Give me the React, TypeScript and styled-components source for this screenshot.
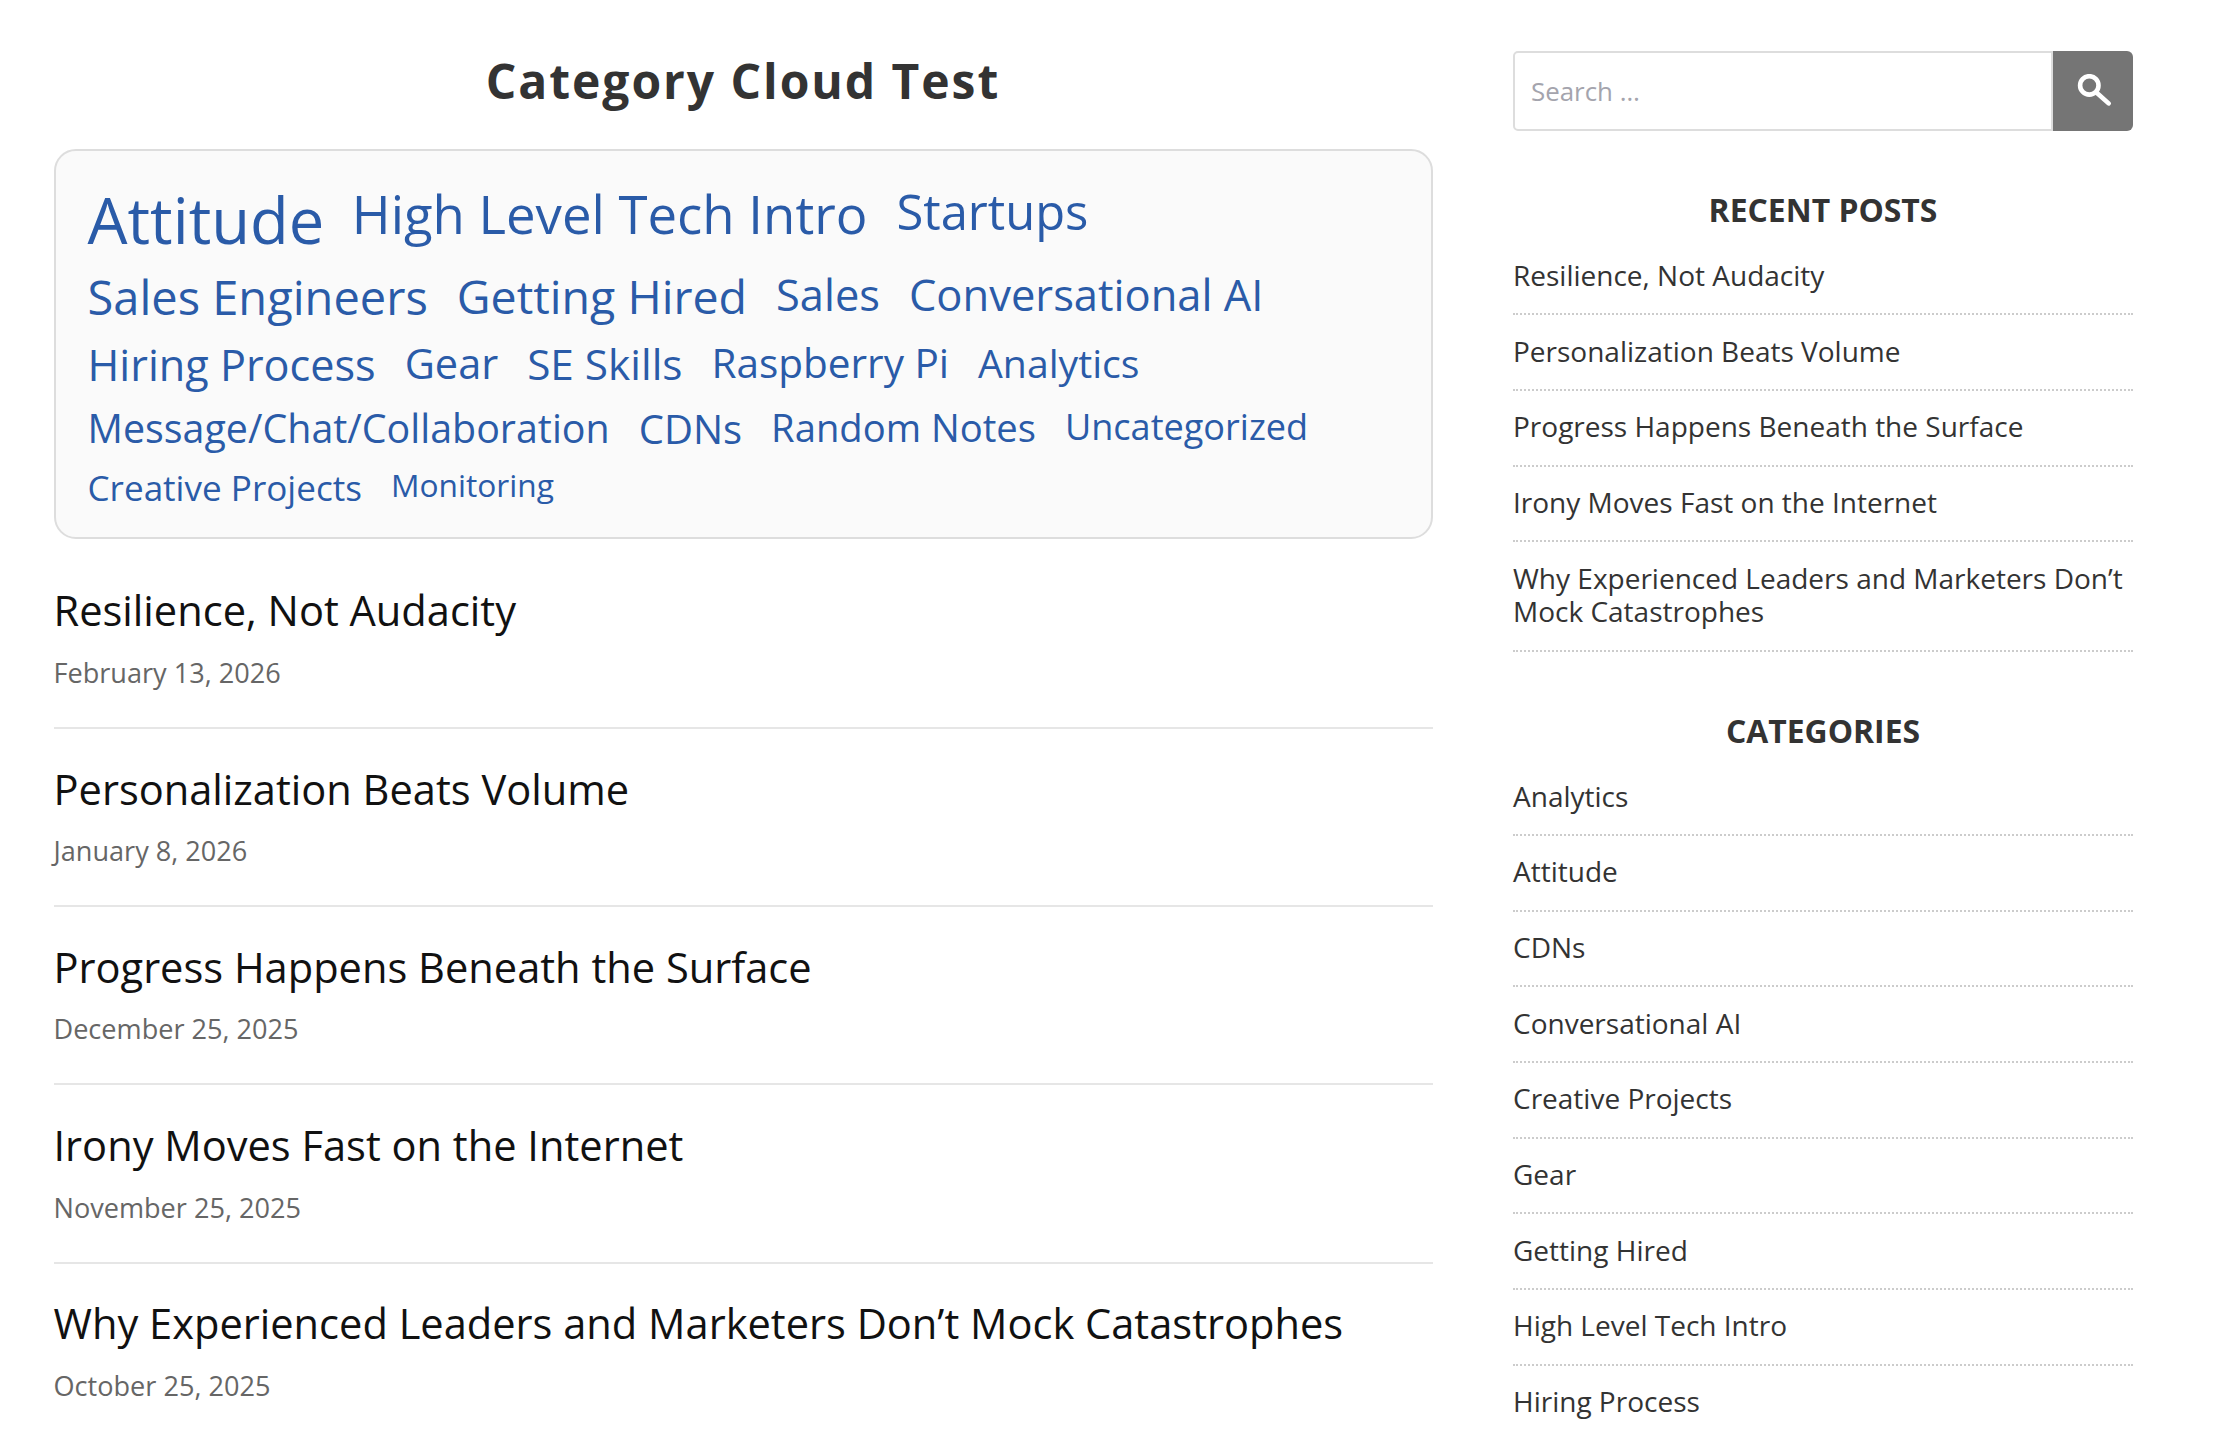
import styled, { createGlobalStyle } from 'styled-components';

const GlobalStyle = createGlobalStyle`
  html, body {
    margin: 0;
    padding: 0;
    background: #fff;
    overflow: hidden;
    font-family: "Open Sans", "Liberation Sans", sans-serif;
  }
`;

const Page = styled.div`
  display: grid;
  grid-template-columns: 1379px 620px;
  column-gap: 80.5px;
  padding: 51px 91px 0 53.5px;
  height: 1388px;
  overflow: hidden;
`;

const Main = styled.main`
  min-width: 0;
`;

const PageTitle = styled.h1`
  margin: 3px 0 41px;
  font-size: 48px;
  line-height: 54px;
  font-weight: 700;
  letter-spacing: 1.95px;
  text-align: center;
  color: #333;
`;

const Cloud = styled.div`
  display: flex;
  flex-wrap: wrap;
  align-items: flex-start;
  gap: 13.8px 29px;
  padding: 31px 32px 29px;
  background: #fafafa;
  border: 2px solid #ddd;
  border-radius: 22px;
`;

const CloudLink = styled.a<{ $size: number }>`
  font-size: ${(p) => p.$size}px;
  line-height: 1.2;
  color: #2a5ba8;
  text-decoration: none;

  &:first-child {
    margin: 0 -1.5px -3px 0;
  }
`;

const PostRow = styled.article`
  padding: 34.7px 0 38px;
  border-bottom: 2px solid #e6e6e6;

  &:first-of-type {
    padding-top: 46px;
  }
`;

const PostTitle = styled.h2`
  margin: 0 0 21.5px;
  font-size: 41.6px;
  line-height: 50px;
  font-weight: 400;
  color: #111;
`;

const PostDate = styled.div`
  font-size: 27.1px;
  line-height: 32px;
  color: #666;
`;

const Sidebar = styled.aside`
  display: flex;
  flex-direction: column;
  gap: 60px;
`;

const SearchForm = styled.form`
  display: flex;
  height: 80px;
`;

const SearchInput = styled.input`
  flex: 1;
  min-width: 0;
  box-sizing: border-box;
  padding: 0 16px;
  border: 2px solid #ddd;
  border-radius: 5px 0 0 5px;
  font-family: inherit;
  font-size: 25.9px;
  color: #333;
  outline: none;

  &::placeholder {
    color: #a4a4ad;
    opacity: 1;
  }
`;

const SearchButton = styled.button`
  display: flex;
  align-items: center;
  justify-content: center;
  width: 80px;
  padding: 0;
  border: 0;
  border-radius: 0 6px 6px 0;
  background: #757575;
`;

const Widget = styled.section`
  display: flex;
  flex-direction: column;
  gap: 10.6px;
`;

const WidgetTitle = styled.h3`
  margin: 0;
  font-size: 31.9px;
  line-height: 38px;
  font-weight: 700;
  text-align: center;
  text-transform: uppercase;
  color: #333;
`;

const LinkList = styled.ul`
  margin: 0;
  padding: 0;
  list-style: none;
`;

const LinkItem = styled.li`
  padding: 19.3px 0 20.8px;
  border-bottom: 2px dotted #ccc;
  font-size: 28px;
  line-height: 33.6px;
  color: #333;
`;

const SearchIcon = () => (
  <svg width="36" height="34" viewBox="0 0 36 34" fill="none" stroke="#fff" strokeWidth="4.6" strokeLinecap="round">
    <circle cx="14.3" cy="11.4" r="9.2" />
    <path d="M22 19 L33.6 29.4" />
  </svg>
);

const cloud: [string, number][] = [
  ['Attitude', 63.3],
  ['High Level Tech Intro', 52.7],
  ['Startups', 48.9],
  ['Sales Engineers', 47],
  ['Getting Hired', 46.5],
  ['Sales', 43.4],
  ['Conversational AI', 43.5],
  ['Hiring Process', 43.2],
  ['Gear', 41.5],
  ['SE Skills', 42.3],
  ['Raspberry Pi', 40.5],
  ['Analytics', 39.2],
  ['Message/Chat/Collaboration', 39.4],
  ['CDNs', 40],
  ['Random Notes', 38.2],
  ['Uncategorized', 36.1],
  ['Creative Projects', 35.1],
  ['Monitoring', 31.7],
];

const posts = [
  ['Resilience, Not Audacity', 'February 13, 2026'],
  ['Personalization Beats Volume', 'January 8, 2026'],
  ['Progress Happens Beneath the Surface', 'December 25, 2025'],
  ['Irony Moves Fast on the Internet', 'November 25, 2025'],
  ['Why Experienced Leaders and Marketers Don’t Mock Catastrophes', 'October 25, 2025'],
];

const categories = [
  'Analytics',
  'Attitude',
  'CDNs',
  'Conversational AI',
  'Creative Projects',
  'Gear',
  'Getting Hired',
  'High Level Tech Intro',
  'Hiring Process',
];

const App = () => {
  return (
    <>
      <GlobalStyle />
      <Page>
        <Main>
          <PageTitle>Category Cloud Test</PageTitle>
          <Cloud>
            {cloud.map(([name, size]) => (
              <CloudLink key={name} $size={size}>
                {name}
              </CloudLink>
            ))}
          </Cloud>
          {posts.map(([title, date]) => (
            <PostRow key={title}>
              <PostTitle>{title}</PostTitle>
              <PostDate>{date}</PostDate>
            </PostRow>
          ))}
        </Main>
        <Sidebar>
          <SearchForm>
            <SearchInput placeholder="Search …" />
            <SearchButton type="button" aria-label="Search">
              <SearchIcon />
            </SearchButton>
          </SearchForm>
          <Widget>
            <WidgetTitle>Recent Posts</WidgetTitle>
            <LinkList>
              {posts.map(([title]) => (
                <LinkItem key={title}>{title}</LinkItem>
              ))}
            </LinkList>
          </Widget>
          <Widget>
            <WidgetTitle>Categories</WidgetTitle>
            <LinkList>
              {categories.map((name) => (
                <LinkItem key={name}>{name}</LinkItem>
              ))}
            </LinkList>
          </Widget>
        </Sidebar>
      </Page>
    </>
  );
};

export default App;
